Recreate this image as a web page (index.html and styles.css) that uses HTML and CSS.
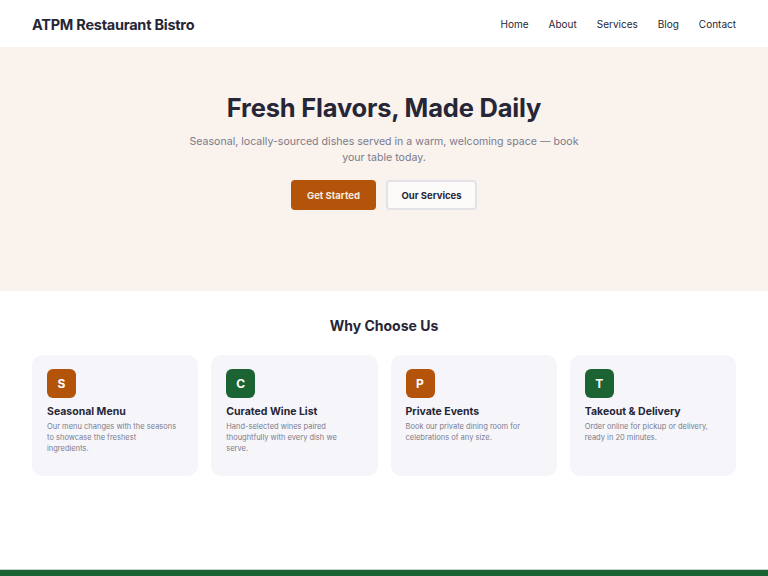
FILE: index.html
```html
<!DOCTYPE html>
<html lang="en">
<head>
<meta charset="utf-8">
<title>ATPM Restaurant Bistro</title>
<link rel="stylesheet" href="styles.css">
</head>
<body>
<header class="site-header">
  <div class="brand">ATPM Restaurant Bistro</div>
  <nav class="nav">
    <a href="#">Home</a>
    <a href="#">About</a>
    <a href="#">Services</a>
    <a href="#">Blog</a>
    <a href="#">Contact</a>
  </nav>
</header>
<section class="hero">
  <h1>Fresh Flavors, Made Daily</h1>
  <p>Seasonal, locally-sourced dishes served in a warm, welcoming space — book your table today.</p>
  <div class="actions">
    <a class="btn btn-primary" href="#">Get Started</a>
    <a class="btn btn-secondary" href="#">Our Services</a>
  </div>
</section>
<section class="features">
  <h2>Why Choose Us</h2>
  <div class="grid">
    <div class="card">
      <div class="icon orange">S</div>
      <h3>Seasonal Menu</h3>
      <p>Our menu changes with the seasons to showcase the freshest ingredients.</p>
    </div>
    <div class="card">
      <div class="icon green">C</div>
      <h3>Curated Wine List</h3>
      <p>Hand-selected wines paired thoughtfully with every dish we serve.</p>
    </div>
    <div class="card">
      <div class="icon orange">P</div>
      <h3>Private Events</h3>
      <p>Book our private dining room for celebrations of any size.</p>
    </div>
    <div class="card">
      <div class="icon green">T</div>
      <h3>Takeout &amp; Delivery</h3>
      <p>Order online for pickup or delivery, ready in 20 minutes.</p>
    </div>
  </div>
</section>
<footer class="footer"></footer>
</body>
</html>
```
FILE: styles.css
```css
* { box-sizing: border-box; }
html, body { margin: 0; padding: 0; }
body {
  font-family: Inter, "Noto Sans", sans-serif;
  color: #262637;
  background: #fff;
  height: 576px;
  display: flex;
  flex-direction: column;
}
.site-header {
  height: 47px;
  display: flex;
  align-items: center;
  justify-content: space-between;
  padding: 1px 32px 0;
  background: #fff;
}
.brand {
  font-weight: 700;
  font-size: 14.5px;
  letter-spacing: -0.25px;
}
.nav { display: flex; gap: 20px; }
.nav a {
  font-size: 10px;
  color: #262637;
  text-decoration: none;
}
.hero {
  background: #f9f2ed;
  height: 244px;
  display: flex;
  flex-direction: column;
  align-items: center;
  padding-top: 45px;
}
.hero h1 {
  margin: 0;
  font-size: 25.5px;
  font-weight: 700;
  letter-spacing: -0.2px;
  line-height: 32px;
}
.hero p {
  margin: 10px 0 0;
  width: 396px;
  text-align: center;
  font-size: 10.6px;
  line-height: 16px;
  color: #7b7b8c;
}
.actions { display: flex; gap: 10px; margin-top: 14px; }
.btn {
  height: 30px;
  display: flex;
  align-items: center;
  justify-content: center;
  border-radius: 4px;
  font-size: 9.5px;
  font-weight: 700;
  text-decoration: none;
}
.btn-primary { width: 85px; background: #b4540b; color: #f6e9df; }
.btn-secondary { width: 91px; background: #fdfbfa; color: #262637; border: 2px solid #e2e2e8; }
.features {
  flex: 1;
  padding: 26px 32px 0;
}
.features h2 {
  margin: 0;
  text-align: center;
  font-size: 14px;
  font-weight: 700;
  line-height: 18px;
}
.grid {
  display: grid;
  grid-template-columns: repeat(4, 1fr);
  gap: 13px;
  margin-top: 20px;
}
.card {
  background: #f6f6fa;
  border-radius: 10px;
  height: 121px;
  padding: 14px 15px;
}
.icon {
  width: 29px;
  height: 29px;
  border-radius: 6px;
  color: #fff;
  font-weight: 700;
  font-size: 12px;
  display: flex;
  align-items: center;
  justify-content: center;
}
.orange { background: #b4540b; }
.green { background: #1b6333; }
.card h3 {
  margin: 7px 0 0;
  font-size: 10.5px;
  font-weight: 700;
  line-height: 13px;
}
.card p {
  margin: 3px 0 0;
  font-size: 7.5px;
  line-height: 11px;
  color: #7b7b8c;
  max-width: 132px;
}
.footer {
  height: 7px;
  background: #1b6333;
  border-top: 1px solid #c9cfc9;
}
```
